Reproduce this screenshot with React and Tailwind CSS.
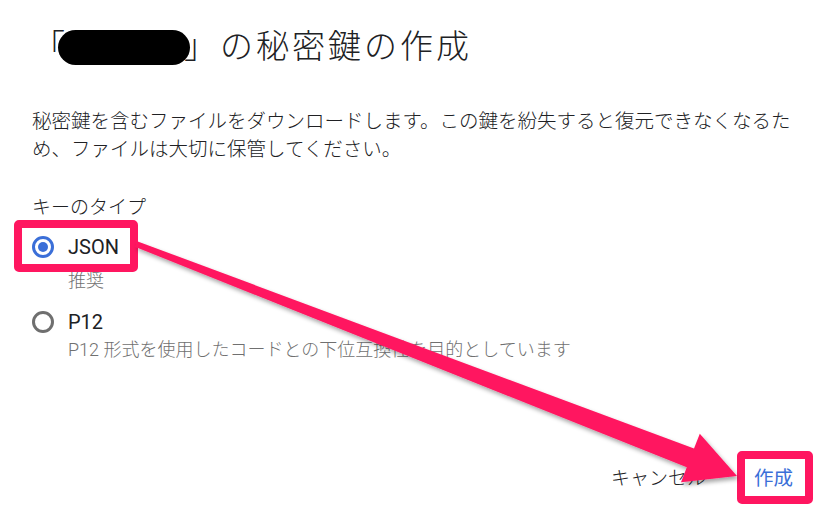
import React from 'react'

const PINK = '#ff1660'

// overlay arrow from the JSON box to the 作成 button
const Arrow = () => (
  <svg
    className="absolute inset-0 pointer-events-none"
    width="825"
    height="519"
    viewBox="0 0 825 519"
  >
    <defs>
      <filter id="arrowShadow" x="-10%" y="-10%" width="120%" height="130%">
        <feDropShadow dx="2" dy="3" stdDeviation="2" floodColor="#000" floodOpacity="0.35" />
      </filter>
    </defs>
    <polygon
      filter="url(#arrowShadow)"
      fill={PINK}
      points="137.1,241.2 694,448.6 699.8,433.7 737,476 681,482.2 686.8,467.3 134.9,246.8"
    />
  </svg>
)

const Radio = ({ checked }) =>
  checked ? (
    <span className="w-[22px] h-[22px] rounded-full border-[3px] border-[#3b6fd8] flex items-center justify-center shrink-0">
      <span className="w-[10px] h-[10px] rounded-full bg-[#3b6fd8]" />
    </span>
  ) : (
    <span className="w-[22px] h-[22px] rounded-full border-[3px] border-[#6f6f6f] shrink-0" />
  )

const App = () => {
  return (
    <div className="relative w-[825px] h-[519px] bg-white overflow-hidden flex flex-col font-['Roboto','Noto_Sans_CJK_JP',sans-serif] text-[#202124]">
      <div className="pl-8 pt-[27px]">
        <h1 className="flex items-center text-[33px] leading-[40px] font-light tracking-[3px]">
          <span>「</span>
          <span className="inline-block w-[132px] h-[35px] rounded-full bg-black -ml-[10px] -mr-[6px]" />
          <span>」の秘密鍵の作成</span>
        </h1>

        <p className="mt-[41px] w-[772px] text-[19.5px] leading-[28px] font-light">
          秘密鍵を含むファイルをダウンロードします。この鍵を紛失すると復元できなくなるため、ファイルは大切に保管してください。
        </p>

        <p className="mt-[30px] text-[19px] leading-[28px] font-light">キーのタイプ</p>

        <div className="mt-[11px] relative flex items-center gap-[14px] h-[28px]">
          <Radio checked />
          <span className="text-[20px]">JSON</span>
          <span className="absolute -left-[18px] -top-[13px] w-[124px] h-[52px] border-[8px] border-[#ff1660] rounded-[5px]" />
        </div>
        <p className="mt-[8px] pl-9 text-[18px] leading-[24px] font-light text-[#707070]">推奨</p>

        <div className="mt-[15px] flex items-center gap-[14px] h-[28px]">
          <Radio />
          <span className="text-[20px]">P12</span>
        </div>
        <p className="mt-[2px] pl-9 text-[18px] leading-[24px] font-light text-[#707070]">
          P12 形式を使用したコードとの下位互換性を目的としています
        </p>
      </div>

      <div className="mt-auto pb-[22px] pr-8 flex justify-end items-center gap-[48px] h-[58px]">
        <button className="text-[19px] leading-[36px] font-light text-[#202124]">キャンセル</button>
        <button className="relative text-[19.5px] leading-[36px] text-[#3b6fd8]">
          作成
          <span className="absolute -left-[17px] -top-[10px] w-[76px] h-[53px] border-[8px] border-[#ff1660] rounded-[5px]" />
        </button>
      </div>

      <Arrow />
    </div>
  )
}

export default App
